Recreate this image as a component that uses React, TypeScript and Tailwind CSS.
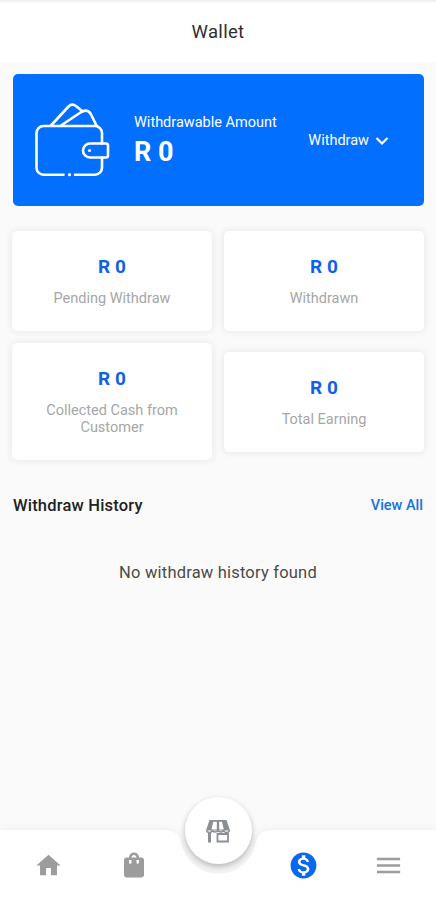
import React from 'react';
import { MdHome, MdShoppingBag, MdMonetizationOn, MdMenu } from 'react-icons/md';

interface StatCardProps {
  amount: string;
  label: string;
}

const StatCard: React.FC<StatCardProps> = ({ amount, label }) => {
  return (
    <div className="rounded-[5px] bg-white px-7 pt-[25px] pb-6 text-center shadow-[0_0_7px_1px_rgba(0,0,0,0.07)]">
      <div className="text-[19px] leading-[22px] font-bold text-[#0f62e6]">{amount}</div>
      <div className="mt-[12px] text-[14.5px] leading-[17px] text-[#a6a6a6]">{label}</div>
    </div>
  );
};

const WalletIcon = () => (
  <svg
    width="110"
    height="100"
    viewBox="0 0 110 100"
    fill="none"
    stroke="white"
    strokeWidth="2.6"
    strokeLinecap="round"
    strokeLinejoin="round"
  >
    <path d="M44.5 84.7H24.5a7 7 0 0 1-7-7V43a7 7 0 0 1 7-7H76a7 7 0 0 1 7 7V53.500M83 67.500V77.700a7 7 0 0 1-7 7H56" />
    <path d="M87 53.500H71a7 7 0 0 0 0 14H87a2 2 0 0 0 2-2V55.500a2 2 0 0 0-2-2Z" />
    <path d="M32 35.500L49.500 16.500Q53 13 57 16L63 21" />
    <path d="M42 35.500L61.500 22.500Q68 18.500 71.500 23.500L77.500 35.500" />
    <circle cx="70.500" cy="60.500" r="1.600" fill="white" stroke="none" />
    <circle cx="50.500" cy="84.700" r="1.600" fill="white" stroke="none" />
  </svg>
);

const StoreIcon = () => (
  <svg width="26" height="24" viewBox="0 0 26 24" fill="none" stroke="#8b8e93">
    <path d="M4.500 1H21.500L25 11.500H1Z" fill="#8b8e93" stroke="none" />
    <path d="M8.200 2.800H11.800V10.500H6.500ZM14.200 2.800H17L18.800 10.500H14.200Z" fill="#fff" stroke="none" />
    <path d="M1.500 11a2.900 2.400 0 0 0 5.800 0a2.900 2.400 0 0 0 5.700 0a2.900 2.400 0 0 0 5.700 0a2.900 2.400 0 0 0 5.800 0" strokeWidth="1.400" />
    <path d="M4.500 13V23.500" strokeWidth="3" />
    <path d="M12.500 15H23V22.500H12.500Z" strokeWidth="1.800" />
  </svg>
);

const App: React.FC = () => {
  return (
    <div className="flex h-[900px] w-full flex-col overflow-hidden bg-[#fafafa] font-['Roboto',sans-serif]">
      <header className="flex h-[62px] items-center justify-center border-t-2 border-[#f1f1f1] bg-white">
        <h1 className="mt-px text-[18.5px] tracking-[0.3px] text-[#2f2f2f]">Wallet</h1>
      </header>

      <main className="flex-1 px-3 pt-3">
        <section className="ml-px flex h-[132px] items-center rounded-[5px] bg-[#036fff] text-white">
          <div className="ml-[6px] shrink-0">
            <WalletIcon />
          </div>
          <div className="mt-[2px] ml-[5px] flex-1 whitespace-nowrap">
            <div className="text-[14.5px] leading-[18px]">Withdrawable Amount</div>
            <div className="mt-[3px] text-[27px] leading-[34px] font-bold">R 0</div>
          </div>
          <button className="mt-px mr-[35px] flex items-center gap-[6px] text-[14.5px]">
            Withdraw
            <svg width="14" height="10" viewBox="0 0 14 10" fill="none" stroke="white" strokeWidth="2.2">
              <path d="M1.500 2L7 7.500L12.500 2" />
            </svg>
          </button>
        </section>

        <section className="mt-[25px] grid grid-cols-2 items-center gap-3">
          <StatCard amount="R 0" label="Pending Withdraw" />
          <StatCard amount="R 0" label="Withdrawn" />
          <StatCard amount="R 0" label="Collected Cash from Customer" />
          <StatCard amount="R 0" label="Total Earning" />
        </section>

        <div className="mt-[34px] flex items-center justify-between px-px">
          <h2 className="text-[16.5px] leading-6 font-medium tracking-[0.2px] text-[#222]">Withdraw History</h2>
          <a className="text-[14.5px] font-medium text-[#1673dd]">View All</a>
        </div>
        <p className="mt-[43px] text-center text-[16.5px] leading-6 tracking-[0.2px] text-[#4a4a4a]">
          No withdraw history found
        </p>
      </main>

      <nav className="relative h-[70px] shrink-0">
        {/* curved bar behind the tabs */}
        <svg className="absolute inset-0 drop-shadow-[0_0_4px_rgba(0,0,0,0.05)]" width="436" height="70" viewBox="0 0 436 70">
          <path d="M0 0H162C174 0 179 4 181 12A38 38 0 0 0 256 12C258 4 263 0 275 0H436V70H0Z" fill="#fff" />
        </svg>
        <div className="absolute -top-[33px] left-[184.5px] flex h-[67px] w-[67px] items-center justify-center rounded-full bg-white shadow-[0_3px_6px_rgba(0,0,0,0.27)]">
          <StoreIcon />
        </div>
        <div className="relative grid h-full grid-cols-5 items-center justify-items-center pr-[5.5px] pl-[6.5px] text-[#9c9c9c]">
          <MdHome size={29} />
          <MdShoppingBag size={30} />
          <span />
          <MdMonetizationOn size={31} className="text-[#0769ef]" />
          <MdMenu size={31} />
        </div>
      </nav>
    </div>
  );
};

export default App;
